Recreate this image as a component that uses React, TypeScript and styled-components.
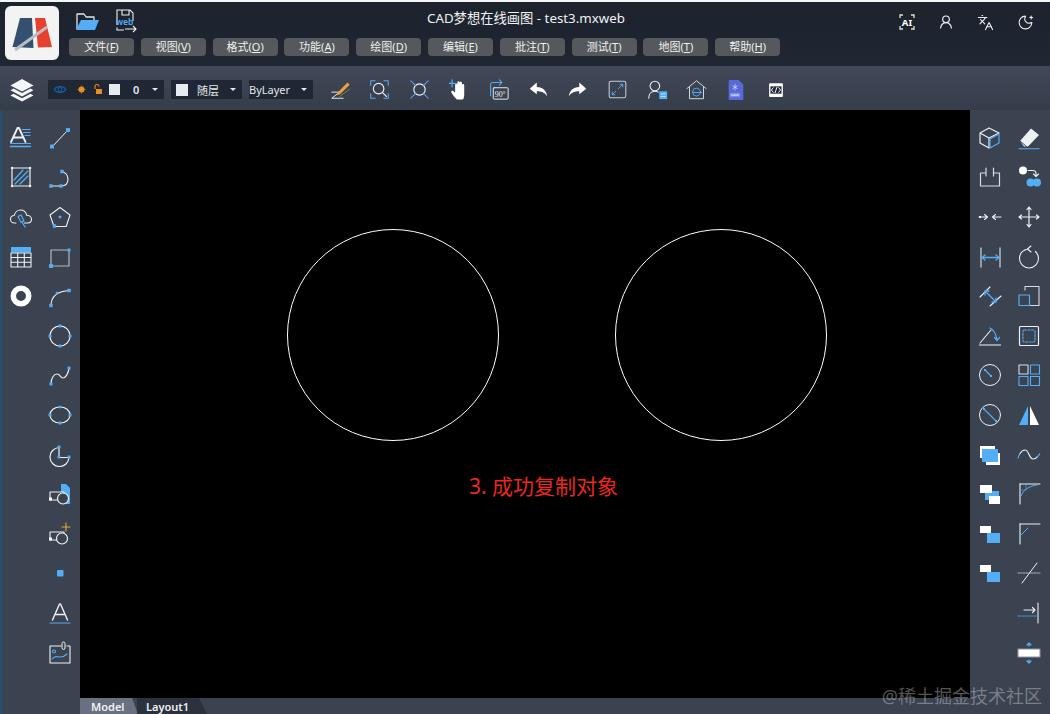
import React from 'react';
import styled, { createGlobalStyle } from 'styled-components';
import { Languages, MoonStar, UserRound } from 'lucide-react';

const BLUE = '#54aef5';
const WHITE = '#eef1f4';
const SIDE = '#3b4351';
const FONT = `"Noto Sans", "Noto Sans CJK SC", sans-serif`;

const Global = createGlobalStyle`
  html, body {
    margin: 0;
    padding: 0;
    background: #000;
    overflow: hidden;
  }
`;

const Page = styled.div`
  width: 1050px;
  height: 714px;
  position: relative;
  display: flex;
  flex-direction: column;
  overflow: hidden;
  font-family: ${FONT};
  border-top: 2px solid #f4f5f6;
  box-sizing: border-box;
`;

const Header = styled.header`
  height: 64px;
  flex: none;
  display: flex;
  background: linear-gradient(to bottom, #1d232d, #202632);
  padding: 4px 0 0 5px;
  box-sizing: border-box;
`;

const Logo = styled.div`
  width: 54px;
  height: 54px;
  flex: none;
  border-radius: 6px;
  background: #f3f3f3;
  margin-right: 10px;
`;

const HeaderMain = styled.div`
  flex: 1;
  display: flex;
  flex-direction: column;
`;

const TopRow = styled.div`
  height: 29px;
  display: grid;
  grid-template-columns: 358px auto 1fr;
  align-items: center;
`;

const FileTools = styled.div`
  display: flex;
  align-items: center;
  gap: 15px;
  padding-left: 5px;
`;

const Title = styled.div`
  color: #f0f2f4;
  font-size: 13.3px;
  line-height: 18px;
  margin-top: -6px;
  white-space: nowrap;
`;

const SysTools = styled.div`
  display: flex;
  justify-content: flex-end;
  align-items: center;
  gap: 21.3px;
  padding-right: 16px;
  margin-top: 3px;
  color: ${WHITE};
`;

const SysSlot = styled.div`
  width: 18px;
  height: 18px;
  display: flex;
  align-items: center;
  justify-content: center;
`;

const Menu = styled.nav`
  display: flex;
  gap: 6.8px;
  margin-top: 3px;
`;

const MenuButton = styled.button`
  width: 65px;
  height: 18px;
  padding: 0;
  border: none;
  border-radius: 4px;
  background: #55585c;
  color: #f0f0f0;
  font-family: inherit;
  font-size: 11px;
  line-height: 18px;
  text-align: center;
  white-space: nowrap;

  u {
    text-underline-offset: 1px;
  }
`;

const Toolbar = styled.div`
  height: 44px;
  flex: none;
  display: flex;
  align-items: center;
  padding: 3px 0 0 10px;
  box-sizing: border-box;
  background: linear-gradient(to bottom, #414857, #353c4a);
`;

const LayersSlot = styled.div`
  width: 24px;
  height: 24px;
  margin-right: 14px;
`;

const Select = styled.div<{ $width: number; $mr?: number }>`
  width: ${(p) => p.$width}px;
  margin-right: ${(p) => p.$mr ?? 7}px;
  height: 19px;
  display: flex;
  align-items: center;
  background: #1f2734;
  color: #e4e6ea;
  font-size: 11px;
  position: relative;
  flex: none;
  box-sizing: border-box;
`;

const Swatch = styled.span<{ $size: number; $ml: number }>`
  width: ${(p) => p.$size}px;
  height: ${(p) => p.$size}px;
  margin-left: ${(p) => p.$ml}px;
  background: #e6ebf0;
  flex: none;
`;

const SelectText = styled.span<{ $ml: number; $strong?: boolean }>`
  margin-left: ${(p) => p.$ml}px;
  font-weight: ${(p) => (p.$strong ? 600 : 400)};
  white-space: nowrap;
`;

const Caret = styled.span`
  margin-left: auto;
  margin-right: 6px;
  width: 0;
  height: 0;
  border-left: 3.5px solid transparent;
  border-right: 3.5px solid transparent;
  border-top: 3.5px solid #e6e8ec;
`;

const ToolIcons = styled.div`
  display: flex;
  margin-left: 7.5px;
`;

const ToolSlot = styled.div`
  width: 39.6px;
  height: 24px;
  display: flex;
  justify-content: center;
  align-items: center;
`;

const Body = styled.div`
  flex: 1;
  min-height: 0;
  display: flex;
`;

const Sidebar = styled.aside<{ $left?: boolean }>`
  width: 80px;
  flex: none;
  display: flex;
  box-sizing: border-box;
  background: ${SIDE};
  padding-top: 8px;
  ${(p) => p.$left && 'border-left: 2px solid #24506e;'}
`;

const SideColumn = styled.div<{ $ml: number }>`
  display: flex;
  flex-direction: column;
  width: 39px;
  margin-left: ${(p) => p.$ml}px;
`;

const SideSlot = styled.div`
  height: 39.6px;
  display: flex;
  align-items: center;
  justify-content: center;
`;

const Canvas = styled.main`
  flex: 1;
  position: relative;
  background: #000;
`;

const CanvasDrawing = styled.svg`
  display: block;
  width: 890px;
  height: 588px;
`;

const CanvasNote = styled.div`
  position: absolute;
  left: 389px;
  top: 361px;
  color: #e8281e;
  font-size: 21px;
  line-height: 30px;
  white-space: nowrap;
`;

const TabBar = styled.div`
  height: 16px;
  flex: none;
  display: flex;
  padding-left: 78px;
  border-left: 2px solid #24506e;
  background: ${SIDE};
`;

const Tab = styled.div<{ $active?: boolean }>`
  height: 16px;
  font-size: 11px;
  line-height: 17px;
  font-weight: 600;
  color: #f0f2f4;
  white-space: nowrap;
  box-sizing: border-box;
  margin-right: ${(p) => (p.$active ? -1 : 0)}px;
  width: ${(p) => (p.$active ? 58 : 70)}px;
  padding-left: ${(p) => (p.$active ? 11 : 9)}px;
  background: ${(p) => (p.$active ? '#697080' : '#2b313d')};
  clip-path: ${(p) =>
    p.$active
      ? 'polygon(0 0, 52px 0, 100% 100%, 0 100%)'
      : 'polygon(0 0, 62px 0, 100% 100%, 0 100%)'};
`;

const Watermark = styled.div`
  position: absolute;
  right: 8px;
  bottom: 8px;
  font-size: 18px;
  line-height: 20px;
  color: rgba(225, 225, 225, 0.38);
  white-space: nowrap;
`;

const Svg = ({ children, size = 24 }: { children: React.ReactNode; size?: number }) => (
  <svg
    width={size}
    height={size}
    viewBox="0 0 24 24"
    fill="none"
    stroke={WHITE}
    strokeWidth={1.1}
    strokeLinecap="round"
    strokeLinejoin="round"
  >
    {children}
  </svg>
);

const Dot = ({ x, y, r = 1.4 }: { x: number; y: number; r?: number }) => (
  <rect x={x - r} y={y - r} width={r * 2} height={r * 2} rx={0.5} fill={BLUE} stroke="none" />
);

const leftOne: React.ReactNode[] = [
  <>
    <path d="M2 16 8.500 2h1.500L16.500 16M4.500 11.500h9.500" strokeWidth={1.800} />
    <path d="M13 3.500h8M14.500 6.500h6.500M16 9.500h5M1.500 17.500h20" stroke={BLUE} />
    <path d="M1.500 20.500h20" stroke={BLUE} strokeWidth={1.300} />
  </>,
  <>
    <rect x="3" y="3" width="18" height="18" strokeWidth={1.2} />
    <path d="M5 15 14 5M6 19 19 6M11 19l8-8" stroke={BLUE} strokeWidth={1.2} />
    <path d="M3 3h.1M21 3h.1M3 21h.1M21 21h.1" strokeWidth={2.4} />
  </>,
  <>
    <path d="M7 18H5.500C3 18 1.500 16 1.500 14.200c0-2 1.600-3.600 3.800-3.700C5.800 7.400 8.400 5 11.500 5c3.200 0 5.600 2.300 6.200 5.300 2.500.1 4.800 1.700 4.800 4 0 2.200-1.700 3.700-4 3.700h-3" strokeWidth={1.1} />
    <path d="M9 11.500l3-1.500 3 6-3 1.300zM13 17l3 5" stroke={BLUE} strokeWidth={1.2} />
  </>,
  <>
    <rect x="2" y="2" width="20" height="5.500" fill={BLUE} stroke="none" />
    <path d="M2 8v14h20V8zM2 12.500h20M2 17.200h20M8.700 8v14M15.300 8v14" strokeWidth={1.1} />
  </>,
  <circle cx="12" cy="12" r="7.700" strokeWidth={5.500} stroke="#fff" />,
];

const leftTwo: React.ReactNode[] = [
  <>
    <path d="M4 21 20 4" strokeWidth={1} />
    <Dot x={4} y={20.500} r={2} />
    <Dot x={20} y={4} r={2} />
  </>,
  <>
    <path d="M3 21h10c3 0 7-1.500 7-7 0-4-3-7-6-7" strokeWidth={1.1} />
    <Dot x={3} y={21} r={1.700} />
    <Dot x={13} y={21} r={1.700} />
    <Dot x={14} y={6.500} r={1.700} />
  </>,
  <>
    <path d="M12 2.500 22 10l-3.800 11.500H6L2 10z" strokeWidth={1.1} />
    <Dot x={12} y={12} r={1.300} />
    <Dot x={6.500} y={21} r={1.700} />
  </>,
  <>
    <path d="M3 5h18v16H3z" stroke="#b4bac2" strokeWidth={1.2} />
    <Dot x={21} y={5} r={1.500} />
    <Dot x={3} y={21} r={2} />
  </>,
  <>
    <path d="M3 22c0-9 6-15 19-15.500" strokeWidth={1.100} />
    <Dot x={3} y={21.500} r={1.700} />
    <Dot x={9} y={9} r={1.200} />
    <Dot x={21} y={6.500} r={1.700} />
  </>,
  <>
    <circle cx="12" cy="12" r="10" strokeWidth={1.200} />
    <Dot x={12} y={2} r={1.500} />
    <Dot x={12} y={22} r={1.500} />
    <Dot x={2} y={12} r={1.500} />
    <Dot x={22} y={12} r={1.500} />
  </>,
  <>
    <path d="M3 21c0-6 3-10 6-10 3.500 0 3 4 6 4 3.500 0 5-5 6-9" strokeWidth={1.200} />
    <Dot x={3} y={21} r={1.500} />
    <Dot x={21} y={5} r={1.500} />
  </>,
  <>
    <ellipse cx="12" cy="12" rx="10" ry="8" strokeWidth={1.200} />
    <Dot x={2} y={12} r={1.500} />
    <Dot x={22} y={12} r={1.500} />
    <Dot x={12} y={4} r={1.300} />
    <Dot x={12} y={20} r={1.500} />
  </>,
  <>
    <path d="M11 4.500A9.500 9.500 0 1 0 21 14.500H11z" strokeWidth={1.200} />
    <Dot x={11} y={4} r={1.500} />
    <Dot x={11} y={14} r={1.500} />
    <Dot x={21} y={14} r={1.500} />
  </>,
  <>
    <path d="M13 2h5l4 4v16H13z" fill={BLUE} stroke="none" />
    <path d="M2 10h14v8H2z" fill={SIDE} />
    <circle cx="15" cy="16.500" r="5.500" fill={SIDE} strokeWidth={1.200} />
    <rect x="1" y="15.500" width="3" height="3" fill="#fff" stroke="none" />
  </>,
  <>
    <path d="M18 1v8M14 5h8" stroke="#e8a33a" strokeWidth={1.100} />
    <path d="M2 10h14v8H2z" />
    <circle cx="14" cy="16.500" r="5.500" fill={SIDE} strokeWidth={1.200} />
    <rect x="1" y="15.500" width="3" height="3" fill="#fff" stroke="none" />
  </>,
  <rect x="9" y="9" width="6.500" height="6.500" rx="1" fill={BLUE} stroke="none" />,
  <>
    <path d="M4.500 19 11.500 3h1l7 16M7 13.500h10" strokeWidth={1.400} />
    <path d="M2 22h20" stroke={BLUE} strokeWidth={1} />
  </>,
  <>
    <path d="M13 5H2v17h20V5h-3" strokeWidth={1.100} />
    <path d="M14 5V2.500a1.500 1.500 0 0 1 3 0V7a1.500 1.500 0 0 1-3 0z" strokeWidth={1} />
    <circle cx="6" cy="10.500" r="1.500" stroke={BLUE} />
    <path d="M4 18c3-4 5-2 8-2s5-1 7-3" stroke={BLUE} />
  </>,
];

const rightOne: React.ReactNode[] = [
  <>
    <path d="M11 2 2 7v10l9 5V12L2 7M11 2l10 5-10 5" strokeWidth={1.200} />
    <path d="M12 13l9-5v9l-9 5z" stroke={BLUE} strokeWidth={1.200} />
  </>,
  <path d="M8 8H2.500v13h19V8H16M8 3v8M15.500 3v8" strokeWidth={1.200} stroke="#d8dde2" />,
  <>
    <path d="M1 12h8M6.500 9.500 9.500 12l-3 2.500" strokeWidth={1.100} />
    <path d="M23 12h-8M17.500 9.500 14.500 12l3 2.500" strokeWidth={1.100} />
    <rect x="1" y="11" width="2" height="2" fill={WHITE} stroke="none" />
  </>,
  <>
    <path d="M3 3v19M22 3v19" stroke="#c6ccd3" strokeWidth={1.300} />
    <path d="M4 12.500h17M7 10 4 12.500 7 15M18 10l3 2.500-3 2.500" stroke={BLUE} strokeWidth={1.300} />
  </>,
  <>
    <path d="M2 13 12 3M12 22 23 12" strokeWidth={1.100} />
    <path d="M7 7 18 18M7 11V7h4M14 18h4v-4" stroke={BLUE} strokeWidth={1.300} />
  </>,
  <>
    <path d="M2 19 13 6" strokeWidth={1.100} />
    <path d="M1.500 21h21" stroke="#b5bbc3" strokeWidth={1.400} />
    <path d="M12 4c4 2 6 6 7 12M16.500 13.500 19 16.500l2.500-3" stroke={BLUE} strokeWidth={1.200} />
  </>,
  <>
    <circle cx="12" cy="12" r="10.500" strokeWidth={1} />
    <path d="M7 7l6 6" stroke={BLUE} strokeWidth={1.200} />
    <rect x="6" y="6" width="2" height="2" fill={BLUE} stroke="none" />
    <rect x="12" y="12" width="2" height="2" fill={BLUE} stroke="none" />
  </>,
  <>
    <circle cx="12" cy="12" r="10.500" strokeWidth={1} />
    <path d="M6 6 18 18" stroke={BLUE} strokeWidth={1.100} />
    <rect x="5" y="5" width="2" height="2" fill={BLUE} stroke="none" />
    <rect x="17" y="17" width="2" height="2" fill={BLUE} stroke="none" />
  </>,
  <>
    <rect x="2" y="3" width="15" height="12" fill="#fff" stroke="none" />
    <rect x="8" y="10" width="14" height="12" fill="#fff" stroke="none" />
    <rect x="4" y="6" width="16" height="13" fill={BLUE} stroke="none" />
  </>,
  <>
    <rect x="7" y="9" width="14" height="9" fill={BLUE} stroke="none" />
    <rect x="2" y="3" width="12" height="8" fill="#fff" stroke="none" />
    <rect x="11" y="14" width="11" height="8" fill="#fff" stroke="none" />
  </>,
  <>
    <rect x="9" y="11" width="13" height="10" fill={BLUE} stroke="none" />
    <rect x="2" y="4" width="11" height="7" fill="#fff" stroke="none" />
  </>,
  <>
    <rect x="9" y="11" width="13" height="10" fill={BLUE} stroke="none" />
    <rect x="2" y="4" width="11" height="7" fill="#fff" stroke="none" />
  </>,
];

const rightTwo: React.ReactNode[] = [
  <>
    <path d="M3 15 14 2.500l8 6.500L11 20.500H7z" fill={WHITE} stroke="none" />
    <path d="M3 15l7 6" stroke={SIDE} strokeWidth={1} />
    <path d="M2 22.800h20" stroke={BLUE} strokeWidth={1.100} />
  </>,
  <>
    <circle cx="6" cy="5.500" r="4" fill="#fff" stroke="none" />
    <circle cx="13.500" cy="17.500" r="4" fill={BLUE} stroke="none" />
    <circle cx="20" cy="17.500" r="4" fill={BLUE} stroke="none" />
    <path d="M11 5.500h5c2 0 3 1 3 3v2M16.500 9l2.500 2.500L21.500 9" strokeWidth={1.100} />
  </>,
  <path d="M12 2v20M2 12h20M10 4.500 12 2l2 2.500M10 19.500l2 2.500 2-2.500M4.500 10 2 12l2.500 2M19.500 10l2.500 2-2.500 2" strokeWidth={1.200} />,
  <path d="M14 1 10.500 4 14 7M11 4C6 5 2.500 8.500 2.500 13.500a9.500 9.500 0 0 0 19 0c0-3-1-5-3-7" strokeWidth={1.100} />,
  <>
    <path d="M8 6V2.500h14v19H13" strokeWidth={1.100} stroke="#d8dde2" />
    <rect x="2" y="11" width="10.500" height="10.500" stroke={BLUE} strokeWidth={1.200} />
  </>,
  <>
    <rect x="2.500" y="2.500" width="19" height="19" rx="1" strokeWidth={1.200} />
    <rect x="6" y="6" width="12" height="12" rx="1.500" stroke={BLUE} strokeDasharray="2 1.500" />
  </>,
  <>
    <rect x="2" y="2" width="9" height="9" stroke="#d8dde2" strokeWidth={1.100} />
    <rect x="13.500" y="2" width="9" height="9" stroke={BLUE} strokeWidth={1.100} />
    <rect x="2" y="13.500" width="9" height="9" stroke={BLUE} strokeWidth={1.100} />
    <rect x="13.500" y="13.500" width="9" height="9" stroke={BLUE} strokeWidth={1.100} />
  </>,
  <>
    <path d="M11 3v19H2z" fill={BLUE} stroke="none" />
    <path d="M13 3v19h9z" fill="#fff" stroke="none" />
  </>,
  <>
    <path d="M3 10.500C4.500 8 6.500 7 8 7c4 0 4 9 8 9 2.500 0 3.500-1 4-2" strokeWidth={1.200} />
    <path d="M1 15c.5-1.500 1-2.500 2-4.500M20 14c1.500-1 2.500-2.500 3-4" stroke={BLUE} strokeWidth={1.200} strokeDasharray="1.500 1" />
  </>,
  <>
    <path d="M3 1.500V22M3 2h20" strokeWidth={1.100} />
    <path d="M4 14C6 8 12 4 20 3" stroke={BLUE} strokeWidth={1} />
    <path d="M3 8h6V2" stroke={BLUE} strokeWidth={0.7} strokeDasharray="1 1" />
  </>,
  <>
    <path d="M3 1.500V22M3 2h20" strokeWidth={1.100} />
    <path d="M3 14 11 6" stroke={BLUE} strokeWidth={1} />
  </>,
  <>
    <path d="M5 22 20 2" strokeWidth={1} />
    <path d="M1 12h22" stroke={WHITE} strokeWidth={0.7} strokeDasharray="1.500 1.200" />
  </>,
  <>
    <path d="M21 2v20" stroke="#d8dde2" strokeWidth={1.200} />
    <path d="M7 9h11M15.500 6.500 18 9l-2.500 2.500" strokeWidth={1.200} />
    <path d="M1 15h19" stroke={BLUE} strokeWidth={0.8} strokeDasharray="1.500 1.200" />
  </>,
  <>
    <rect x="1" y="8" width="22" height="8" fill="#fff" stroke="#8d949e" />
    <path d="M12 2v3M10 4l2-2 2 2M12 19v3M10 20l2 2 2-2" stroke={BLUE} strokeWidth={1.300} />
  </>,
];

const toolbarIcons: React.ReactNode[] = [
  <>
    <path d="M2 15h9L2 22h13" strokeWidth={1.100} stroke="#e8ecf0" />
    <path d="M9 15 20 4l2.500 2.500-11 11-3.500 1z" fill="#e8a33a" stroke="none" />
    <path d="M11 20 22 12" stroke="#e8a33a" strokeWidth={0.600} />
  </>,
  <>
    <path d="M2 7V2h5M17 2h5v5M22 17v5h-5M7 22H2v-5" stroke={BLUE} strokeWidth={1.200} />
    <circle cx="11" cy="11" r="6" strokeWidth={1.300} />
    <path d="M15.500 15.500 20 20" strokeWidth={1.300} />
  </>,
  <>
    <circle cx="12" cy="12" r="6.500" strokeWidth={1.300} />
    <path d="M2 2l5.500 5.500M22 2l-5.500 5.500M2 22l5.500-5.500M22 22l-5.500-5.500" stroke={BLUE} strokeWidth={1.200} />
  </>,
  <>
    <path
      d="M9 23.500c-2-2-5-6-6.500-8.500 0-1.500 1.500-2 2.800-1L7 15.500V6.500c0-1.800 2.600-1.800 2.600 0V4c0-1.800 2.600-1.800 2.600 0V4.500c0-1.800 2.600-1.800 2.600 0v2.500c0-1.800 2.600-1.800 2.600 0V18c0 3-1 5.500-2 5.500z"
      fill="#fff"
      stroke="none"
    />
    <path d="M3.500 1v8M0 5h7" stroke={BLUE} strokeWidth={1.400} />
  </>,
  <>
    <path d="M3 19V6c0-1 1-2 2-2h11M13 1l3 3-3 3" stroke={BLUE} strokeWidth={1.200} />
    <rect x="6" y="10" width="17" height="13" rx="1" strokeWidth={1.100} fill="#3a414f" />
    <text x="14" y="20" textAnchor="middle" fontSize="9" fill={WHITE} stroke="none" fontFamily={`"Liberation Serif", serif`}>
      90°
    </text>
  </>,
  <path d="M10 4 2 11l8 6.500V14c5 0 9 1 12 6-1-7-5-11-12-11z" fill="#fff" stroke="none" />,
  <path d="M14 4l8 7-8 6.500V14c-5 0-9 1-12 6 1-7 5-11 12-11z" fill="#fff" stroke="none" />,
  <>
    <rect x="2.500" y="2.500" width="19" height="19" rx="2" stroke="#c6ccd3" strokeWidth={1.200} />
    <path d="M6 18 10 14M13 11l5-5M15 6h3v3M6 15v3h3" stroke={BLUE} strokeWidth={1.100} />
  </>,
  <>
    <circle cx="9" cy="8" r="5.500" strokeWidth={1.200} />
    <path d="M2 22c0-5 3-8 7-8 1.500 0 3 .5 4 1" strokeWidth={1.200} />
    <rect x="14" y="14" width="9" height="9" fill={BLUE} stroke="none" />
    <path d="M16 17h5M16 20h5" stroke="#e6f2ff" strokeWidth={0.800} />
  </>,
  <>
    <path d="M1 11 12 2l11 9M4 9.500V22.500h16V9.500" strokeWidth={1.100} stroke="#d8dde2" />
    <circle cx="12" cy="15" r="4.500" stroke={BLUE} />
    <path d="M8 15.500h10" stroke={BLUE} />
  </>,
  <>
    <path d="M5 1h10l5 5v17H5a1 1 0 0 1-1-1V2a1 1 0 0 1 1-1z" fill="#5a69d8" stroke="none" />
    <path d="M11 6v6M8.500 7.500l5 3M13.500 7.500l-5 3" stroke="#cfe0ff" strokeWidth={0.800} />
    <rect x="5.500" y="15" width="11" height="5" rx="1" fill="#7b89e6" stroke="none" />
    <path d="M7 17.500h8" stroke="#fff" strokeWidth={0.900} strokeDasharray="1.500 .7" />
  </>,
  <>
    <rect x="4.500" y="4.500" width="15" height="15" rx="1" fill="#fff" stroke="none" />
    <rect x="6" y="8" width="12" height="8" fill="#232a36" stroke="none" />
    <path d="M9 9.500 7 12l2 2.500M15 9.500l2 2.500-2 2.500M13 9l-2 6" stroke="#fff" strokeWidth={1} />
  </>,
];

const menus: [string, string][] = [
  ['文件', 'F'],
  ['视图', 'V'],
  ['格式', 'O'],
  ['功能', 'A'],
  ['绘图', 'D'],
  ['编辑', 'E'],
  ['批注', 'T'],
  ['测试', 'T'],
  ['地图', 'T'],
  ['帮助', 'H'],
];

const Column = ({ items, ml }: { items: React.ReactNode[]; ml: number }) => (
  <SideColumn $ml={ml}>
    {items.map((item, i) => (
      <SideSlot key={i}>
        <Svg>{item}</Svg>
      </SideSlot>
    ))}
  </SideColumn>
);

export default function App() {
  return (
    <Page>
      <Global />
      <Header>
        <Logo>
          <svg width="54" height="54" viewBox="0 0 54 54">
            <path d="M15 12h12l1.500 30L7.500 41z" fill="#34506e" />
            <path d="M30 12h10l7 29-14 .5z" fill="#e8402f" />
            <path d="M10 44 42 21" stroke="#b9bec6" strokeWidth="3" />
          </svg>
        </Logo>
        <HeaderMain>
          <TopRow>
            <FileTools>
              <svg width="26" height="24" viewBox="0 0 26 24" fill="none">
                <path d="M3 20V5h7l2 3h8v3" stroke="#dfe6ee" strokeWidth="1.300" strokeLinejoin="round" />
                <path d="M7 11h18l-4 10H2z" fill={BLUE} />
              </svg>
              <svg width="24" height="26" viewBox="0 0 24 26" fill="none" stroke={WHITE} strokeWidth="1.100">
                <path d="M2 17V2h13l3 3v8M7 2v5h7V2M2 19.500V22h7" />
                <text x="1" y="16.500" fontSize="8.500" fill={BLUE} stroke="none" fontFamily={FONT} fontWeight={600}>
                  web
                </text>
                <path d="M10 21h11M18 18l3 3-3 3" />
              </svg>
            </FileTools>
            <Title>CAD梦想在线画图 - test3.mxweb</Title>
            <SysTools>
              <SysSlot>
                <svg width="16" height="16" viewBox="0 0 16 16" fill="none">
                  <path d="M1 4V1h3M12 1h3v3M15 12v3h-3M4 15H1v-3" stroke="#d9e8c8" strokeWidth="1.300" />
                  <text x="8" y="11.500" textAnchor="middle" fontSize="9.500" fontWeight={700} fill="#fff" fontFamily={FONT}>
                    AI
                  </text>
                </svg>
              </SysSlot>
              <SysSlot>
                <UserRound size={16} strokeWidth={1.800} />
              </SysSlot>
              <SysSlot>
                <Languages size={17} strokeWidth={1.500} />
              </SysSlot>
              <SysSlot>
                <MoonStar size={17} strokeWidth={1.500} />
              </SysSlot>
            </SysTools>
          </TopRow>
          <Menu>
            {menus.map(([name, key]) => (
              <MenuButton key={name}>
                {name}(<u>{key}</u>)
              </MenuButton>
            ))}
          </Menu>
        </HeaderMain>
      </Header>
      <Toolbar>
        <LayersSlot>
          <svg width="24" height="24" viewBox="0 0 24 24" fill="#f4f6f8">
            <path d="M12 1 23.500 7.500 12 13.500.5 7.500z" />
            <path d="M3.500 10.500 12 15l8.500-4.500 3 1.700L12 18.500.5 12.200z" />
            <path d="M3.500 15.700 12 20.200l8.500-4.500 3 1.700L12 23.500.5 17.400z" />
          </svg>
        </LayersSlot>
        <Select $width={116}>
          <svg width="56" height="19" viewBox="0 0 56 19" fill="none" style={{ flex: 'none', marginLeft: 5 }}>
            <path d="M1 9.500c3-4 9-4 12 0-3 4-9 4-12 0z" stroke="#1d5fa8" strokeWidth="1.200" />
            <circle cx="7" cy="9.500" r="2" stroke="#1d5fa8" />
            <circle cx="28.500" cy="9.500" r="3" fill="#e88f1a" />
            <path d="M24.500 9.500h8M28.500 5.500v8" stroke="#e88f1a" strokeWidth=".6" />
            <path d="M42 9V6.500a2 2 0 0 1 4 0" stroke="#e88f1a" strokeWidth="1.100" />
            <rect x="43" y="9" width="6" height="5" fill="#e88f1a" />
          </svg>
          <Swatch $size={11} $ml={0} />
          <SelectText $ml={13} $strong>
            0
          </SelectText>
          <Caret />
        </Select>
        <Select $width={71}>
          <Swatch $size={12} $ml={5} />
          <SelectText $ml={9}>随层</SelectText>
          <Caret />
        </Select>
        <Select $width={64} $mr={0}>
          <SelectText $ml={0}>ByLayer</SelectText>
          <Caret />
        </Select>
        <ToolIcons>
          {toolbarIcons.map((icon, i) => (
            <ToolSlot key={i}>
              <Svg size={i === 10 || i === 11 ? 22 : 21}>{icon}</Svg>
            </ToolSlot>
          ))}
        </ToolIcons>
      </Toolbar>
      <Body>
        <Sidebar $left>
          <Column items={leftOne} ml={-1} />
          <Column items={leftTwo} ml={0} />
        </Sidebar>
        <Canvas>
          <CanvasDrawing viewBox="0 0 890 588">
            <circle cx="313" cy="225" r="105.500" fill="none" stroke="#fff" strokeWidth="1" />
            <circle cx="641" cy="225" r="105.500" fill="none" stroke="#fff" strokeWidth="1" />
          </CanvasDrawing>
          <CanvasNote>3. 成功复制对象</CanvasNote>
        </Canvas>
        <Sidebar>
          <Column items={rightOne} ml={0} />
          <Column items={rightTwo} ml={0} />
        </Sidebar>
      </Body>
      <TabBar>
        <Tab $active>Model</Tab>
        <Tab>Layout1</Tab>
      </TabBar>
      <Watermark>@稀土掘金技术社区</Watermark>
    </Page>
  );
}
